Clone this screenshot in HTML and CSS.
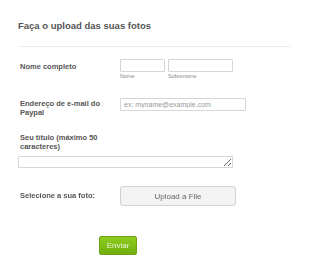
FILE: index.html
```html
<!DOCTYPE html>
<html lang="pt">
<head>
<meta charset="utf-8">
<link rel="stylesheet" href="styles.css">
</head>
<body>
<form class="form">
  <h2 class="title">Faça o upload das suas fotos</h2>
  <hr class="divider">
  <div class="row row-name">
    <label class="label">Nome completo</label>
    <div class="name-fields">
      <div class="sub">
        <input class="input in-first" type="text">
        <span class="sublabel">Nome</span>
      </div>
      <div class="sub">
        <input class="input in-last" type="text">
        <span class="sublabel">Sobrenome</span>
      </div>
    </div>
  </div>
  <div class="row row-email">
    <label class="label">Endereço de e-mail do Paypal</label>
    <input class="input in-email" type="text" placeholder="ex: myname@example.com">
  </div>
  <div class="block row-title">
    <label class="label label-wide">Seu título (máximo 50 caracteres)</label>
    <textarea class="textarea"></textarea>
  </div>
  <div class="row row-upload">
    <label class="label">Selecione a sua foto:</label>
    <button type="button" class="upload">Upload a File</button>
  </div>
  <div class="submit-row">
    <button type="button" class="submit">Enviar</button>
  </div>
</form>
</body>
</html>
```

FILE: styles.css
```css
html, body {
  margin: 0;
  padding: 0;
  background: #fff;
}
body {
  font-family: "Liberation Sans", Arial, sans-serif;
  color: #555;
}
.form {
  padding: 19px 19px 0 18px;
  display: flex;
  flex-direction: column;
}
.title {
  margin: 0;
  font-size: 9.5px;
  line-height: 14px;
  font-weight: bold;
  color: #555;
}
.divider {
  border: 0;
  border-top: 1px solid #eee;
  margin: 13px 0 0 0;
  height: 0;
}
.row {
  display: flex;
  align-items: flex-start;
}
.label {
  width: 100px;
  padding-left: 2px;
  box-sizing: border-box;
  font-size: 7.5px;
  line-height: 9px;
  font-weight: bold;
  color: #555;
}
.row-name { margin-top: 12px; }
.row-name .label { padding-top: 3px; width: 102px; }
.name-fields { display: flex; gap: 3px; }
.sub { display: flex; flex-direction: column; }
.input {
  box-sizing: border-box;
  height: 13px;
  border: 1px solid #d6d6d6;
  border-radius: 1px;
  padding: 0 3px;
  margin: 0;
  font-family: inherit;
  font-size: 7px;
  color: #555;
  background: #fff;
}
.in-first { width: 45px; }
.in-last { width: 65px; }
.sublabel {
  font-size: 5.5px;
  line-height: 7px;
  color: #888;
  margin-top: 1px;
}
.row-email { margin-top: 18px; }
.row-email .label { padding-top: 1px; width: 102px; }
.in-email { width: 126px; }
.in-email::placeholder { color: #999; }
.row-title { margin-top: 16px; }
.block { display: flex; flex-direction: column; }
.label-wide { width: 110px; }
.textarea {
  box-sizing: border-box;
  width: 215px;
  height: 12px;
  margin: 5px 0 0 0;
  border: 1px solid #d6d6d6;
  border-radius: 1px;
  padding: 0;
  resize: vertical;
}
.row-upload { margin-top: 18px; }
.row-upload .label { padding-top: 5px; width: 102px; }
.upload {
  width: 116px;
  height: 20px;
  margin: 0;
  background: #f3f3f3;
  border: 1px solid #d2d2d2;
  border-radius: 3px;
  font-family: inherit;
  font-size: 8px;
  color: #666;
  cursor: pointer;
}
.submit-row {
  margin-top: 28px;
  padding-left: 81px;
}
.submit {
  width: 38px;
  height: 19px;
  margin: 0;
  border: 1px solid #6ea31a;
  border-radius: 2px;
  background: linear-gradient(#8fcc1f, #6fae0c);
  color: #eef7dc;
  font-family: inherit;
  font-size: 8px;
  padding: 0;
}
```
